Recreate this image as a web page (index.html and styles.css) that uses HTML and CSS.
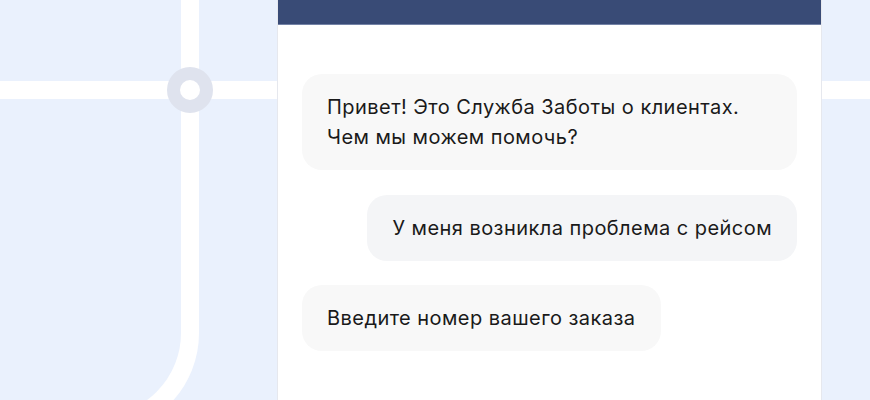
FILE: index.html
```html
<!DOCTYPE html>
<html lang="ru">
<head>
<meta charset="utf-8">
<title>Чат поддержки</title>
<link rel="stylesheet" href="styles.css">
</head>
<body>
<div class="scene">
  <svg class="decor" width="870" height="400" viewBox="0 0 870 400" aria-hidden="true">
    <rect x="0" y="0" width="870" height="400" fill="#eaf1fd"/>
    <rect x="0" y="81" width="870" height="18" fill="#ffffff"/>
    <path d="M190 -5 L190 333 A92 92 0 0 1 98 425" fill="none" stroke="#ffffff" stroke-width="18"/>
    <circle cx="190" cy="90" r="16.5" fill="#ffffff" stroke="#dfe3ee" stroke-width="13"/>
  </svg>
  <main class="panel">
    <header class="panel-header"></header>
    <section class="messages">
      <div class="bubble bubble-in">Привет! Это Служба Заботы о клиентах. Чем мы можем помочь?</div>
      <div class="bubble bubble-out">У меня возникла проблема с рейсом</div>
      <div class="bubble bubble-in">Введите номер вашего заказа</div>
    </section>
  </main>
</div>
</body>
</html>
```
FILE: styles.css
```css
html, body {
  margin: 0;
  padding: 0;
}
body {
  width: 870px;
  height: 400px;
  overflow: hidden;
  background: #eaf1fd;
  font-family: Inter, "Noto Sans", "DejaVu Sans", sans-serif;
}
.scene {
  position: relative;
  width: 870px;
  height: 400px;
}
.decor {
  position: absolute;
  left: 0;
  top: 0;
  z-index: 0;
}
.panel {
  position: relative;
  z-index: 1;
  margin-left: 277px;
  width: 545px;
  height: 400px;
  box-sizing: border-box;
  background: #ffffff;
  border-left: 1px solid #e6e8ee;
  border-right: 1px solid #e6e8ee;
  display: flex;
  flex-direction: column;
}
.panel-header {
  height: 24px;
  background: #394b76;
  border-bottom: 1px solid #7382a6;
  flex: none;
}
.messages {
  display: flex;
  flex-direction: column;
  gap: 24px;
  padding: 49px 24px 0 24px;
}
.bubble {
  box-sizing: border-box;
  max-width: 495px;
  padding: 18px 25px;
  border-radius: 20px;
  font-size: 20px;
  line-height: 30px;
  color: #1a1a1a;
  letter-spacing: 0.45px;
}
.bubble-in {
  align-self: flex-start;
  background: #f8f8f8;
}
.bubble-out {
  align-self: flex-end;
  margin-top: 1px;
  background: #f4f5f7;
}
```
